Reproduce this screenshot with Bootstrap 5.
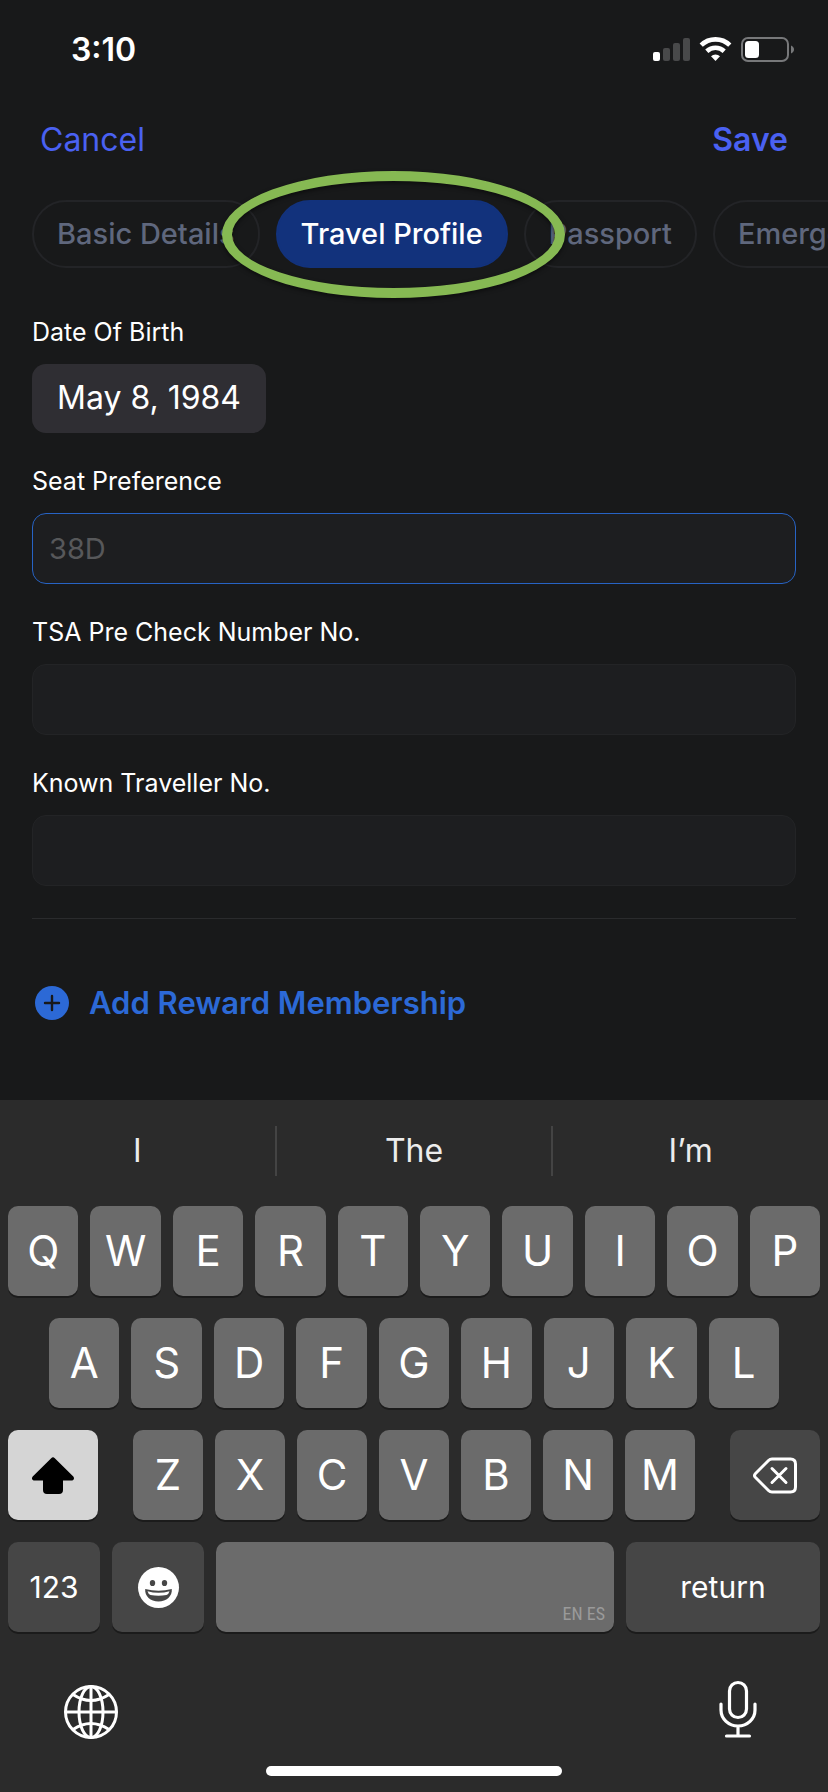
<!DOCTYPE html>
<html lang="en" data-bs-theme="dark">
<head>
<meta charset="utf-8">
<meta name="viewport" content="width=device-width, initial-scale=1">
<title>Travel Profile</title>
<link href="https://cdn.jsdelivr.net/npm/bootstrap@5.3.0/dist/css/bootstrap.min.css" rel="stylesheet">
<style>
body { background: #18191a; color: #fff; font-family: Inter, "Liberation Sans", sans-serif; line-height: 1.2; }
button { font-family: inherit; }
svg { display: block; flex: none; overflow: visible; }
.status-bar { height: 100px; padding: 0 34px 0 71px; font-size: 32px; font-weight: 600; }
.top-bar { height: 64px; padding: 16px 40px 0; }
.top-bar .btn { color: #4a61f2; font-size: 32px; line-height: 48px; border: 0; }
.pill-row { padding: 36px 32px; gap: 16px; overflow: hidden; }
.pill { flex: none; height: 68px; padding: 0 23px; border: 2px solid #232427; border-radius: 34px; background: none; color: #5f677d; font-size: 29px; font-weight: 500; }
.pill.active { background: #12327c; border-color: #12327c; color: #fff; }
.marker { position: absolute; left: -54px; right: -57px; top: -29px; bottom: -30px; border: 10px solid #86b953; border-radius: 50%; pointer-events: none; filter: drop-shadow(0 2px 2px rgba(0,0,0,.5)); z-index: 2; }
.fields { padding: 12px 32px 0; }
.form-label { display: block; margin: 0 0 16px; font-size: 25px; line-height: 32px; }
.form-group { margin-bottom: 32px; }
.date-btn { height: 69px; padding: 0 25px; border: 0; border-radius: 14px; background: #2f2e33; color: #fff; font-size: 32px; }
.form-control, .form-control:focus { height: 71px; padding: 0 16px; border: 1px solid #232426; border-radius: 14px; background: #1d1e20; color: #fff; font-size: 29px; box-shadow: none; }
.form-control.current { border-color: #2763c4; }
.form-control::placeholder { color: #57585a; opacity: 1; }
.divider { margin: 0; border: 0; height: 1px; background: #2a2b2d; opacity: 1; }
.add-link { margin: 64px 3px 40px; gap: 20px; color: #2c69d6; font-size: 31px; line-height: 40px; font-weight: 600; }
.keyboard { background: #2b2b2b; }
.suggestions { height: 106px; padding: 26px 0 30px; }
.suggestion { flex: 1 1 0; height: 50px; border: 0; background: none; color: #ececec; font-size: 32px; }
.suggestion + .suggestion { border-left: 2px solid #444; }
.key-rows { padding: 0 8px; gap: 22px; }
.key-row { gap: 12px; }
.key-row.wide { gap: 35px; }
.key { flex: 1 1 0; min-width: 0; height: 90px; padding: 0; border: 0; border-radius: 10px; background: #6b6b6b; color: #fff; font-size: 42px; line-height: 1; box-shadow: 0 2px 0 #1b1b1b; display: flex; align-items: center; justify-content: center; }
.key.dim { background: #464646; font-size: 30px; }
.key.lit { background: #d5d5d5; }
.row-two { padding: 0 41px; }
.grow-90 { flex-grow: 90; }
.grow-92 { flex-grow: 92; }
.grow-194 { flex-grow: 194; }
.grow-398 { flex-grow: 398; }
.grow-562 { flex: 562 1 0; }
.space-key { align-items: flex-end; justify-content: flex-end; color: #9a9a9a; font-family: "Roboto Condensed", "Liberation Sans Narrow", Roboto, sans-serif; font-size: 18px; }
.space-key span { margin: 0 9px 9px 0; }
.tools { padding: 48px 70px 28px 63px; }
.tools button { border: 0; background: none; padding: 0; }
.home-bar { width: 296px; height: 10px; border-radius: 5px; background: #fff; margin: 0 auto 16px; }
</style>
</head>
<body>
<div class="d-flex flex-column min-vh-100">
  <header>
    <div class="status-bar d-flex align-items-center justify-content-between">
      <span>3:10</span>
      <svg width="141" height="26" viewBox="0 0 141 26" aria-hidden="true">
        <rect x="0" y="15" width="7" height="9" rx="2" fill="#fff"/>
        <g fill="#48494a"><rect x="10" y="11" width="7" height="13" rx="2"/><rect x="20" y="6" width="7" height="18" rx="2"/><rect x="30" y="1" width="7" height="23" rx="2"/></g>
        <g fill="none" stroke="#fff" stroke-width="4.6"><path d="M48.2 8.2a20.5 20.5 0 0 1 28.6 0"/><path d="M53.8 14.2a12.8 12.8 0 0 1 17.4 0"/></g>
        <path d="M58 19.200a6.800 6.800 0 0 1 9 0L62.500 24z" fill="#fff"/>
        <rect x="89" y="1" width="46" height="23" rx="6" fill="none" stroke="#77787a" stroke-width="2"/>
        <rect x="92" y="4" width="14" height="17" rx="3.500" fill="#fff"/>
        <path d="M138 8.500c4 1.500 4 6.500 0 8z" fill="#77787a"/>
      </svg>
    </div>
    <div class="top-bar d-flex align-items-center justify-content-between">
      <button type="button" class="btn p-0">Cancel</button>
      <button type="button" class="btn p-0 fw-semibold">Save</button>
    </div>
  </header>
  <nav class="pill-row d-flex" aria-label="Profile sections">
    <button type="button" class="pill">Basic Details</button>
    <div class="position-relative flex-shrink-0">
      <button type="button" class="pill active" aria-current="page">Travel Profile</button>
      <span class="marker"></span>
    </div>
    <button type="button" class="pill">Passport</button>
    <button type="button" class="pill">Emergency</button>
  </nav>
  <main class="fields flex-grow-1">
    <div class="form-group">
      <label class="form-label" for="dob">Date Of Birth</label>
      <button type="button" class="date-btn" id="dob">May 8, 1984</button>
    </div>
    <div class="form-group">
      <label class="form-label" for="seat">Seat Preference</label>
      <input class="form-control current" id="seat" type="text" placeholder="38D">
    </div>
    <div class="form-group">
      <label class="form-label" for="tsa">TSA Pre Check Number No.</label>
      <input class="form-control" id="tsa" type="text">
    </div>
    <div class="form-group">
      <label class="form-label" for="ktn">Known Traveller No.</label>
      <input class="form-control" id="ktn" type="text">
    </div>
    <hr class="divider">
    <a href="#" class="add-link d-flex align-items-center text-decoration-none">
      <svg width="34" height="34" viewBox="0 0 34 34" aria-hidden="true"><circle cx="17" cy="17" r="17" fill="#2c69d6"/><path d="M17 10v14M10 17h14" stroke="#18191a" stroke-width="2.400" stroke-linecap="round"/></svg>
      <span>Add Reward Membership</span>
    </a>
  </main>
  <section class="keyboard" aria-label="Keyboard">
    <div class="suggestions d-flex">
      <button type="button" class="suggestion">I</button>
      <button type="button" class="suggestion">The</button>
      <button type="button" class="suggestion">I’m</button>
    </div>
    <div class="key-rows d-flex flex-column">
      <div class="key-row d-flex">
        <button type="button" class="key">Q</button><button type="button" class="key">W</button><button type="button" class="key">E</button><button type="button" class="key">R</button><button type="button" class="key">T</button><button type="button" class="key">Y</button><button type="button" class="key">U</button><button type="button" class="key">I</button><button type="button" class="key">O</button><button type="button" class="key">P</button>
      </div>
      <div class="key-row row-two d-flex">
        <button type="button" class="key">A</button><button type="button" class="key">S</button><button type="button" class="key">D</button><button type="button" class="key">F</button><button type="button" class="key">G</button><button type="button" class="key">H</button><button type="button" class="key">J</button><button type="button" class="key">K</button><button type="button" class="key">L</button>
      </div>
      <div class="key-row wide d-flex">
        <button type="button" class="key lit grow-90" aria-label="Shift">
          <svg width="42" height="37" viewBox="0 0 42 37"><path d="M19.200 1.200q1.800-1.800 3.600 0L41.300 19.500c1.500 2 .5 4-2 4H31v9.500q0 4-4 4H15q-4 0-4-4v-9.500H2.700c-2.500 0-3.500-2-2-4z" fill="#000"/></svg>
        </button>
        <div class="key-row grow-562 d-flex">
          <button type="button" class="key">Z</button><button type="button" class="key">X</button><button type="button" class="key">C</button><button type="button" class="key">V</button><button type="button" class="key">B</button><button type="button" class="key">N</button><button type="button" class="key">M</button>
        </div>
        <button type="button" class="key dim grow-90" aria-label="Delete">
          <svg width="44" height="37" viewBox="0 0 44 37" fill="none" stroke="#fff" stroke-width="3" stroke-linecap="round" stroke-linejoin="round"><path d="M19 2h18.500q5 0 5 5v23q0 5-5 5H19q-2 0-3.500-1.500L2.300 20.300q-1.600-1.800 0-3.600L15.500 3.500Q17 2 19 2z"/><path d="M19 11.500l14 14M33 11.500l-14 14"/></svg>
        </button>
      </div>
      <div class="key-row d-flex">
        <button type="button" class="key dim grow-92">123</button>
        <button type="button" class="key dim grow-92" aria-label="Emoji">
          <svg width="41" height="41" viewBox="0 0 41 41"><circle cx="20.500" cy="20.500" r="20.500" fill="#fff"/><g fill="#464646"><ellipse cx="14.500" cy="16" rx="2.700" ry="3.100"/><ellipse cx="26.500" cy="16" rx="2.700" ry="3.100"/><path d="M7.200 22Q20.500 25.500 33.800 22C34.500 29 28.500 34.500 20.500 34.500S6.500 29 7.200 22z"/></g><path d="M9.500 24.200q11 3 22 0-.8 3-3 3.700-8 1.600-16 0-2.200-.7-3-3.700z" fill="#fff"/></svg>
        </button>
        <button type="button" class="key space-key grow-398" aria-label="Space, EN ES"><span>EN ES</span></button>
        <button type="button" class="key dim grow-194">return</button>
      </div>
    </div>
    <div class="tools d-flex align-items-center justify-content-between">
      <button type="button" aria-label="Next keyboard">
        <svg width="56" height="58" viewBox="0 0 56 58" fill="none" stroke="#fff" stroke-width="3"><circle cx="28" cy="32" r="25.500"/><path d="M28 6.500v51M2.500 32h51"/><ellipse cx="28" cy="32" rx="12" ry="25.500"/><path d="M10 14.500q18 12 36 0M10 49.500q18-12 36 0"/></svg>
      </button>
      <button type="button" aria-label="Dictate">
        <svg width="40" height="58" viewBox="0 0 40 58" fill="none" stroke="#fff" stroke-width="3.200" stroke-linecap="round"><rect x="11.500" y="2.500" width="17" height="35" rx="8.500"/><path d="M3 24v6a17 16 0 0 0 34 0v-6M20 46v10M8.500 56h23"/></svg>
      </button>
    </div>
    <div class="d-flex"><div class="home-bar"></div></div>
  </section>
</div>
<script src="https://cdn.jsdelivr.net/npm/bootstrap@5.3.0/dist/js/bootstrap.bundle.min.js"></script>
</body>
</html>
